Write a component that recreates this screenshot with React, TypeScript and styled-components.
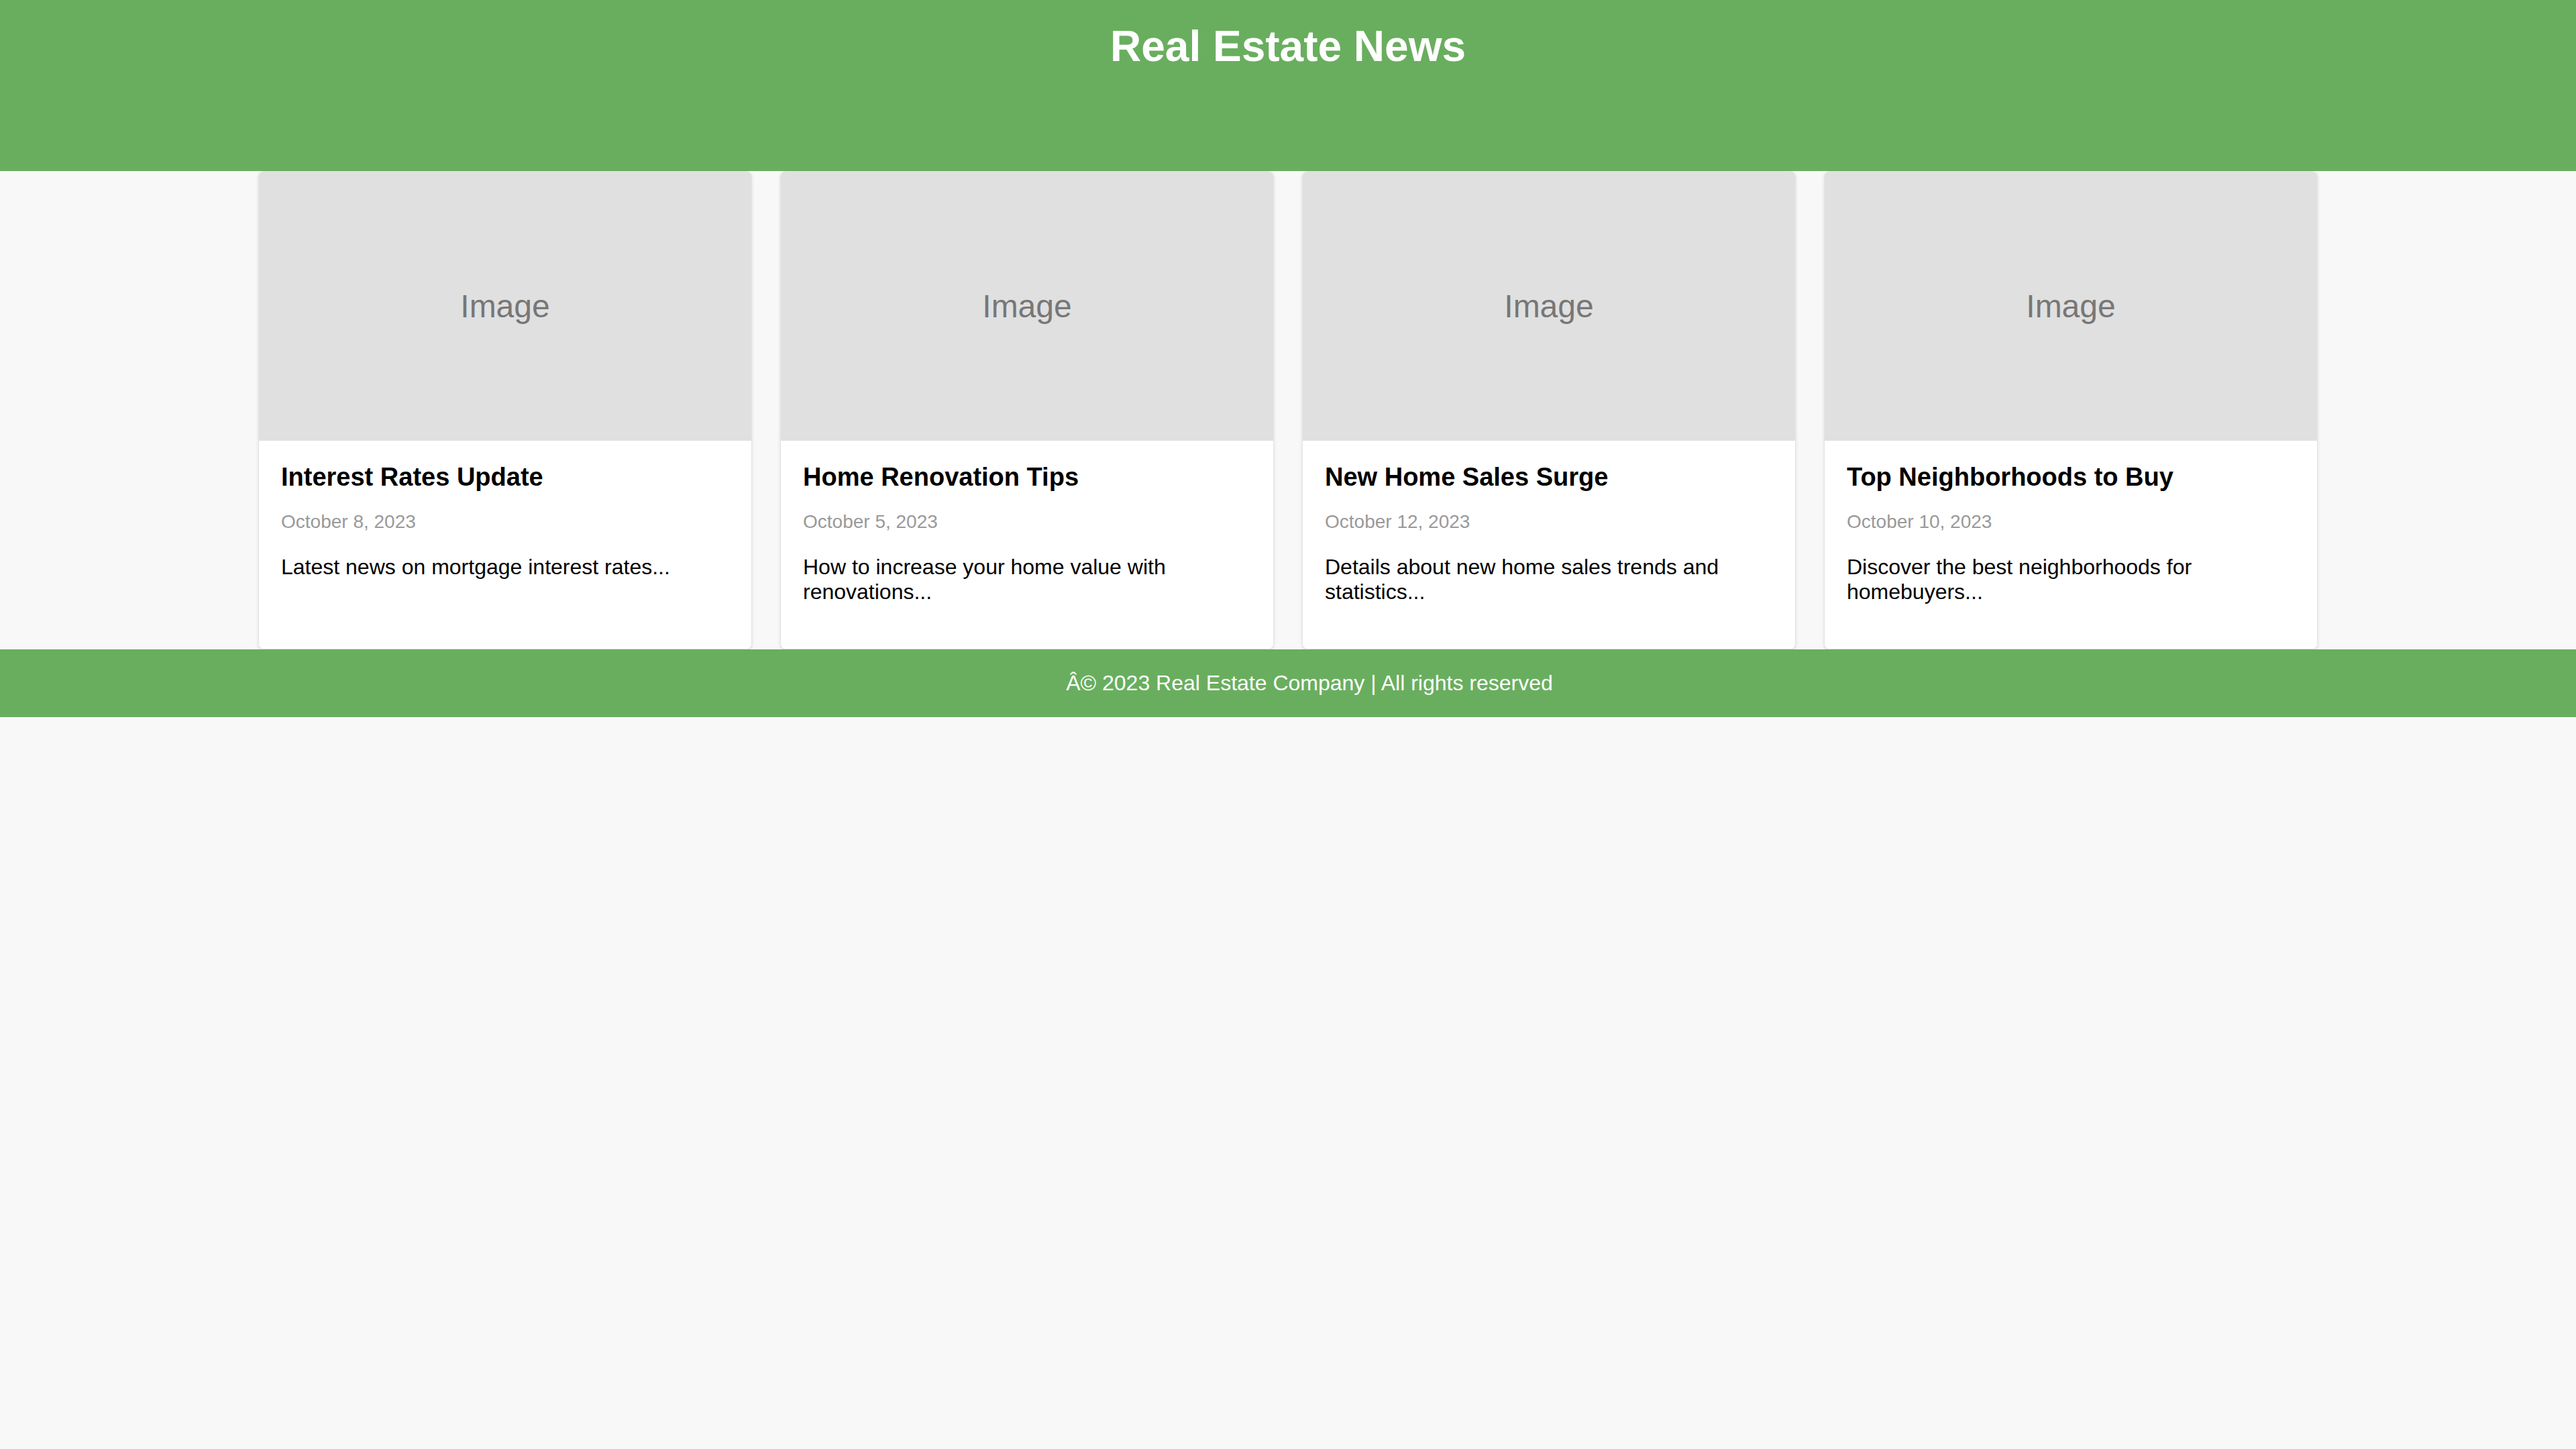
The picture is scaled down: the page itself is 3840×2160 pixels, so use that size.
import React from 'react';
import styled, { createGlobalStyle } from 'styled-components';

type Article = {
  title: string;
  date: string;
  summary: string;
};

const articles: Article[] = [
  {
    title: 'Interest Rates Update',
    date: 'October 8, 2023',
    summary: 'Latest news on mortgage interest rates...',
  },
  {
    title: 'Home Renovation Tips',
    date: 'October 5, 2023',
    summary: 'How to increase your home value with renovations...',
  },
  {
    title: 'New Home Sales Surge',
    date: 'October 12, 2023',
    summary: 'Details about new home sales trends and statistics...',
  },
  {
    title: 'Top Neighborhoods to Buy',
    date: 'October 10, 2023',
    summary: 'Discover the best neighborhoods for homebuyers...',
  },
];

const App: React.FC = () => {
  return (
    <>
      <GlobalStyle />
      <Page>
        <Header>
          <Title>Real Estate News</Title>
        </Header>
        <CardGrid>
          {articles.map((article) => (
            <Card key={article.title}>
              <ImagePlaceholder>Image</ImagePlaceholder>
              <CardBody>
                <CardTitle>{article.title}</CardTitle>
                <CardDate>{article.date}</CardDate>
                <CardSummary>{article.summary}</CardSummary>
              </CardBody>
            </Card>
          ))}
        </CardGrid>
        <Footer>Â© 2023 Real Estate Company | All rights reserved</Footer>
      </Page>
    </>
  );
};

export default App;

const GlobalStyle = createGlobalStyle`
  html, body {
    margin: 0;
    padding: 0;
    overflow-x: hidden;
    background-color: #f8f8f8;
  }
  body {
    font-family: "Liberation Sans", Arial, sans-serif;
    color: #000;
  }
`;

const Page = styled.div`
  display: flex;
  flex-direction: column;
  min-height: 100vh;
  background-color: #f8f8f8;
`;

const Header = styled.header`
  height: 255px;
  box-sizing: border-box;
  padding-top: 32px;
  background-color: #69ae5e;
  color: #fff;
  text-align: center;
`;

const Title = styled.h1`
  margin: 0;
  font-size: 64px;
  font-weight: bold;
`;

const CardGrid = styled.main`
  display: grid;
  grid-template-columns: repeat(4, 1fr);
  gap: 42px;
  width: 100%;
  max-width: 3070px;
  margin: 0 auto;
`;

const Card = styled.article`
  display: flex;
  flex-direction: column;
  background-color: #fff;
  border: 1px solid #e4e4e4;
  border-radius: 8px;
  overflow: hidden;
  box-shadow: 0 2px 5px rgba(0, 0, 0, 0.1);
`;

const ImagePlaceholder = styled.div`
  display: flex;
  align-items: center;
  justify-content: center;
  height: 401px;
  background-color: #e0e0e0;
  color: #777;
  font-size: 48px;
`;

const CardBody = styled.div`
  padding: 33px 33px 34px;
`;

const CardTitle = styled.h3`
  margin: 0;
  font-size: 38px;
  font-weight: bold;
`;

const CardDate = styled.p`
  margin: 29px 0 0;
  font-size: 28px;
  color: #999;
`;

const CardSummary = styled.p`
  margin: 33px 0 32px;
  font-size: 32px;
`;

const Footer = styled.footer`
  width: 100%;
  padding: 32px;
  background-color: #69ae5e;
  color: #fff;
  font-size: 32px;
  text-align: center;
`;
